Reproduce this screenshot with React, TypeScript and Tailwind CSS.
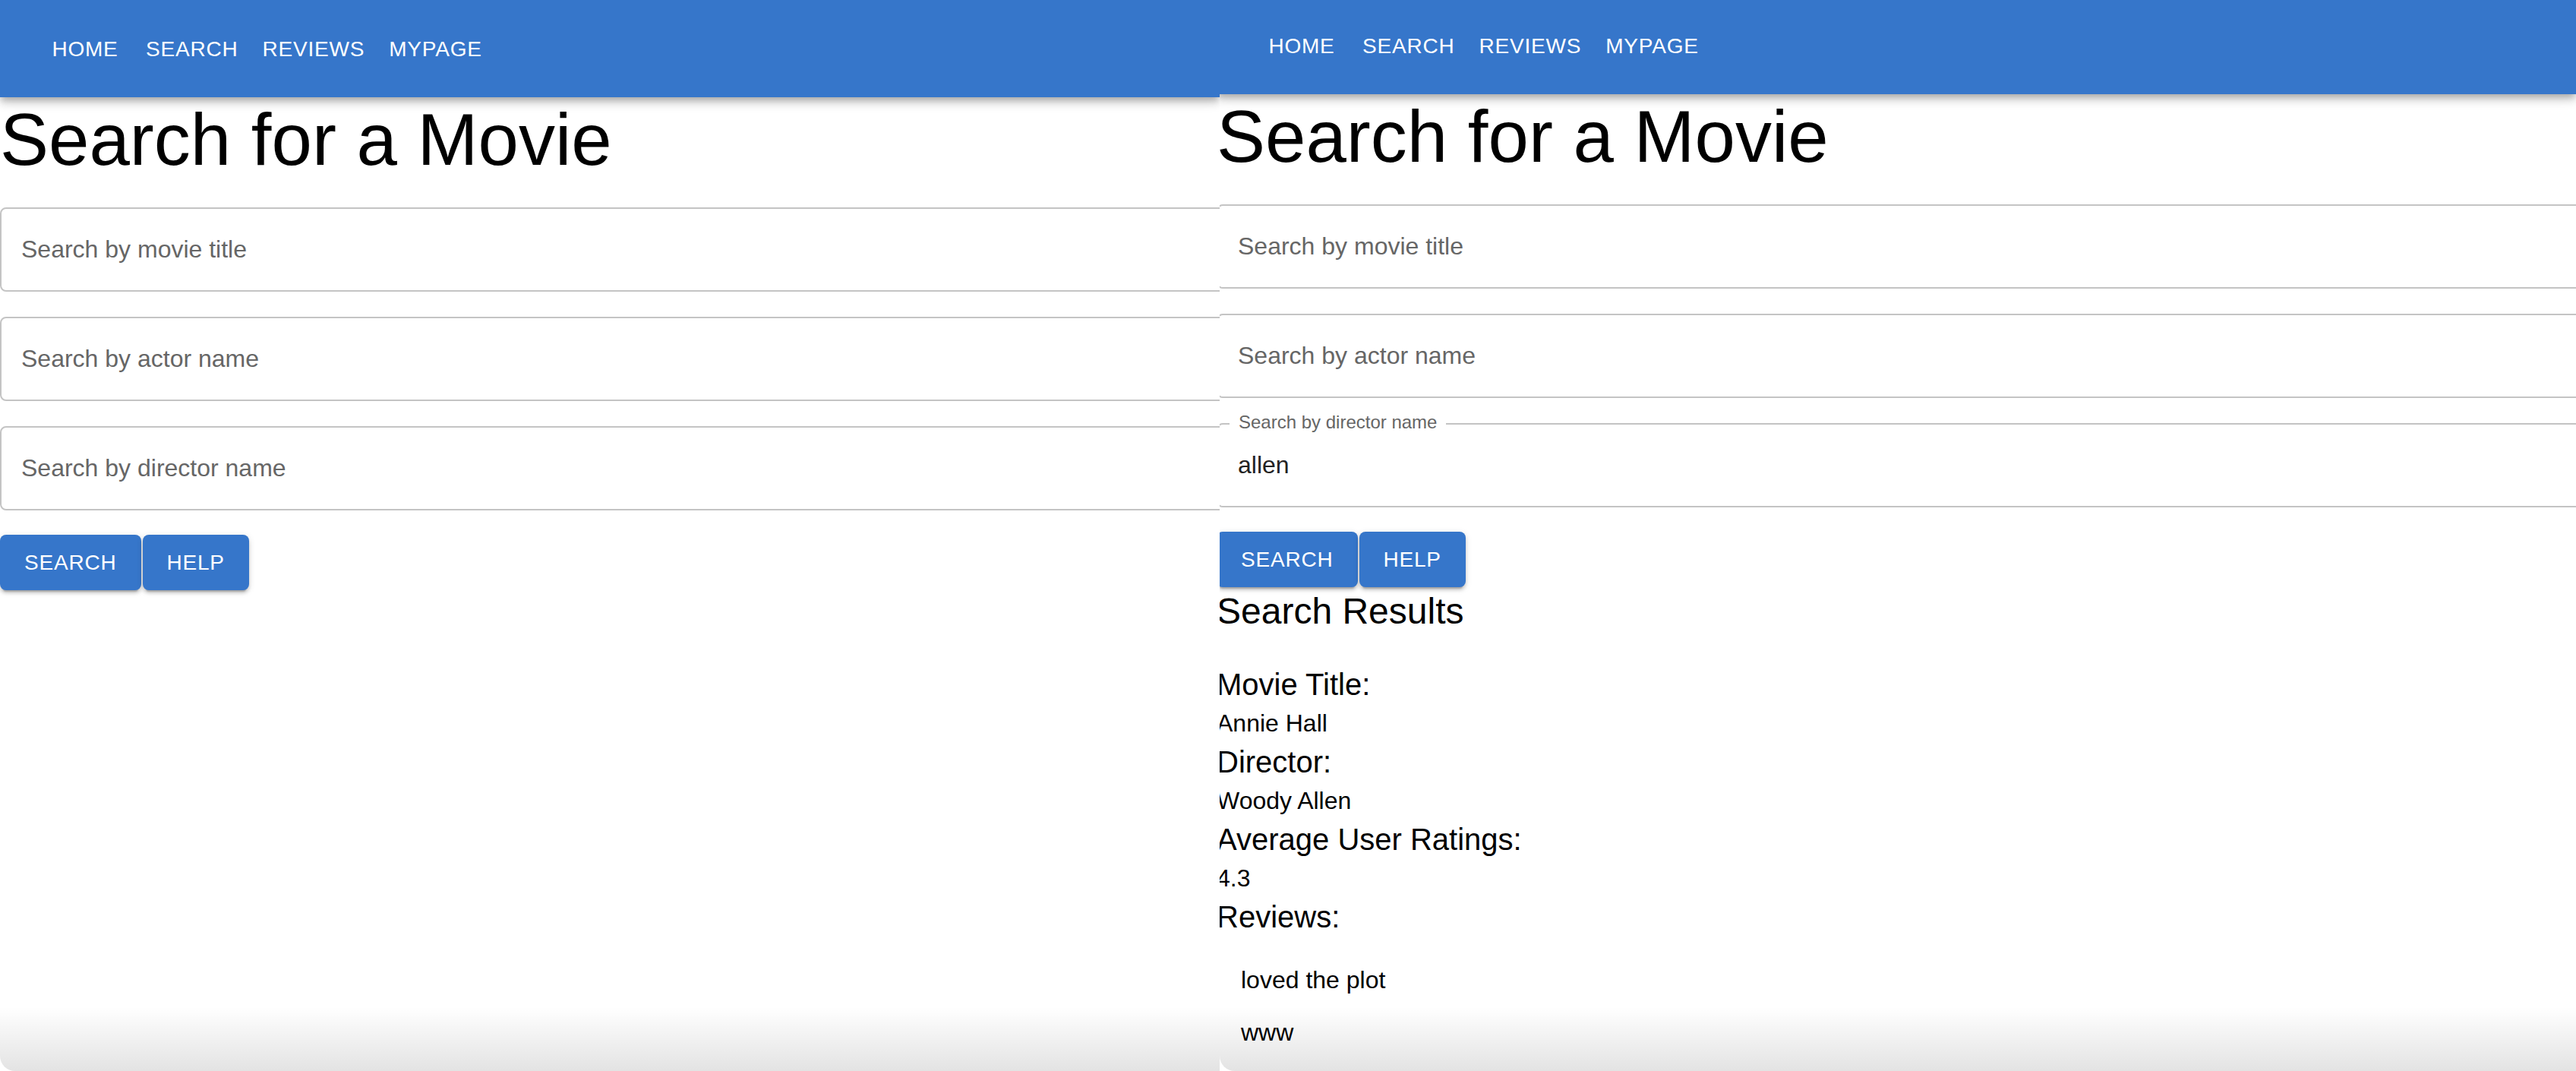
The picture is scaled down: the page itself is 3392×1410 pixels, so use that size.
import React from 'react';

const navItems = ['Home', 'Search', 'Reviews', 'MyPage'];

const searchFields = ['Search by movie title', 'Search by actor name', 'Search by director name'];

interface FieldProps {
  label: string;
  value?: string;
}

// outlined text field, label floats into the notch once it has a value
const SearchField: React.FC<FieldProps> = ({ label, value }) => (
  <div className="relative h-[111px] w-[calc(100%+40px)] rounded-[8px] border-2 border-[#c4c4c4]">
    {value && (
      <span className="absolute -top-[15px] left-[15px] bg-white px-[12px] text-[24px] leading-[24px] text-[#666666]">
        {label}
      </span>
    )}
    <input
      className="h-full w-full bg-transparent px-[26px] text-[32px] text-[#222222] outline-none placeholder:text-[#666666]"
      placeholder={value ? '' : label}
      value={value ?? ''}
      readOnly
    />
  </div>
);

const ActionButton: React.FC<{ children: React.ReactNode }> = ({ children }) => (
  <button
    type="button"
    className="h-[73px] min-w-[128px] rounded-[8px] bg-[#3676ca] px-[32px] text-[28px] uppercase tracking-[0.8px] text-white shadow-[0_6px_2px_-4px_rgba(0,0,0,0.2),0_4px_4px_0_rgba(0,0,0,0.14),0_2px_10px_0_rgba(0,0,0,0.12)]"
  >
    {children}
  </button>
);

const Results: React.FC = () => (
  <div>
    <h5 className="text-[48px] leading-[64px]">Search Results</h5>
    <div className="mt-[38px]">
      <h6 className="text-[40px] leading-[52px]">Movie Title:</h6>
      <p className="text-[32px] leading-[50px]">Annie Hall</p>
      <h6 className="text-[40px] leading-[52px]">Director:</h6>
      <p className="text-[32px] leading-[50px]">Woody Allen</p>
      <h6 className="text-[40px] leading-[52px]">Average User Ratings:</h6>
      <p className="text-[32px] leading-[50px]">4.3</p>
      <h6 className="text-[40px] leading-[52px]">Reviews:</h6>
      <ul className="pt-[23px]">
        <li className="py-[10px] pl-[32px] text-[32px] leading-[49px]">loved the plot</li>
        <li className="py-[10px] pl-[32px] text-[32px] leading-[49px]">www</li>
      </ul>
    </div>
  </div>
);

const SearchPage: React.FC<{ showResults?: boolean }> = ({ showResults }) => (
  <div>
    <header className="relative z-10 flex h-[128px] items-center bg-[#3676ca] pl-[48px] shadow-[0_4px_8px_-2px_rgba(0,0,0,0.2),0_8px_10px_0_rgba(0,0,0,0.14),0_2px_20px_0_rgba(0,0,0,0.12)]">
      {navItems.map(item => (
        <button
          key={item}
          type="button"
          className="min-w-[128px] px-[16px] py-[12px] text-[28px] uppercase leading-[49px] tracking-[0.8px] text-white"
        >
          {item}
        </button>
      ))}
    </header>

    <h1 className="text-[96px] font-normal leading-[112px]">Search for a Movie</h1>

    <div className="mt-[33px] flex flex-col gap-[33px]">
      {searchFields.map((label, i) => (
        <SearchField key={label} label={label} value={showResults && i === 2 ? 'allen' : undefined} />
      ))}
    </div>

    <div className="mt-[32px] flex gap-[2px]">
      <ActionButton>Search</ActionButton>
      <ActionButton>Help</ActionButton>
    </div>

    {showResults && <Results />}
  </div>
);

const BottomShade: React.FC = () => (
  <div className="pointer-events-none absolute bottom-0 left-0 right-0 h-[85px] rounded-bl-[20px] bg-linear-to-b from-black/0 to-black/[0.11]" />
);

export default function App() {
  return (
    <div className="flex h-[1410px] w-[3392px] overflow-hidden bg-white font-['Liberation_Sans',Arial,sans-serif] text-black">
      <div className="relative h-full w-[1606px] shrink-0 overflow-hidden">
        <SearchPage />
        <BottomShade />
      </div>
      <div className="relative h-full w-[1786px] shrink-0 overflow-hidden">
        <div className="-ml-[4px] -mt-[4px]">
          <SearchPage showResults />
        </div>
        <BottomShade />
      </div>
    </div>
  );
}
